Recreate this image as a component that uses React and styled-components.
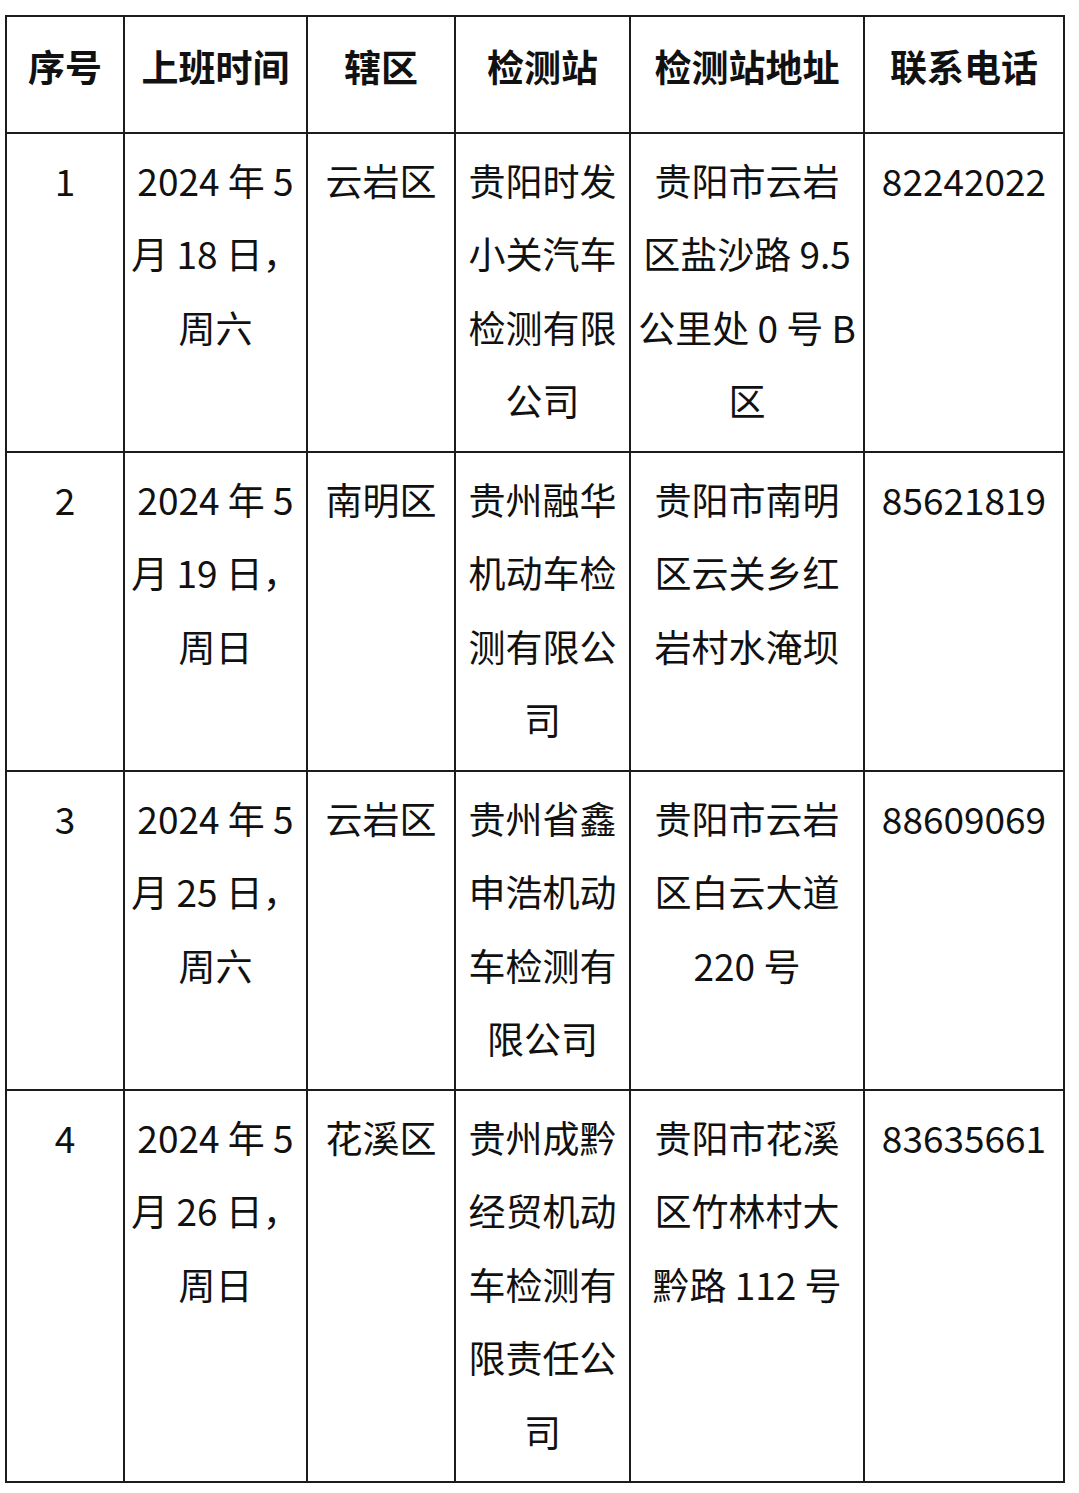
import React from 'react'
import styled, { createGlobalStyle } from 'styled-components'

const GlobalStyle = createGlobalStyle`
  html, body {
    margin: 0;
    padding: 0;
    background: #ffffff;
  }
  body {
    font-family: "Noto Sans CJK SC", "Noto Sans", sans-serif;
    color: #111111;
  }
`;

const Page = styled.div`
  padding: 15px 0 0 5px;
  width: 1079px;
  box-sizing: border-box;
`;

const Table = styled.table`
  border-collapse: collapse;
  table-layout: fixed;
  width: 1058px;
  border: 2px solid #1c1c1c;
`;

const HeadCell = styled.th`
  border: 2px solid #1c1c1c;
  height: 116px;
  box-sizing: border-box;
  padding: 13px 0 28px;
  vertical-align: top;
  text-align: center;
  font-size: 37px;
  font-weight: 700;
  line-height: 73.5px;
  white-space: nowrap;
`;

const Cell = styled.td`
  border: 2px solid #1c1c1c;
  padding: 10px 0 13px;
  vertical-align: top;
  text-align: center;
  font-size: 37px;
  font-weight: 400;
  line-height: 73.5px;
  white-space: nowrap;
`;

const Line = styled.span`
  display: block;
`;

const columns = [
  { title: '序号', width: 118 },
  { title: '上班时间', width: 183 },
  { title: '辖区', width: 148 },
  { title: '检测站', width: 175 },
  { title: '检测站地址', width: 234 },
  { title: '联系电话', width: 200 },
];

const rows = [
  [
    ['1'],
    ['2024 年 5', '月 18 日，', '周六'],
    ['云岩区'],
    ['贵阳时发', '小关汽车', '检测有限', '公司'],
    ['贵阳市云岩', '区盐沙路 9.5', '公里处 0 号 B', '区'],
    ['82242022'],
  ],
  [
    ['2'],
    ['2024 年 5', '月 19 日，', '周日'],
    ['南明区'],
    ['贵州融华', '机动车检', '测有限公', '司'],
    ['贵阳市南明', '区云关乡红', '岩村水淹坝'],
    ['85621819'],
  ],
  [
    ['3'],
    ['2024 年 5', '月 25 日，', '周六'],
    ['云岩区'],
    ['贵州省鑫', '申浩机动', '车检测有', '限公司'],
    ['贵阳市云岩', '区白云大道', '220 号'],
    ['88609069'],
  ],
  [
    ['4'],
    ['2024 年 5', '月 26 日，', '周日'],
    ['花溪区'],
    ['贵州成黔', '经贸机动', '车检测有', '限责任公', '司'],
    ['贵阳市花溪', '区竹林村大', '黔路 112 号'],
    ['83635661'],
  ],
];

function App() {
  return (
    <Page>
      <GlobalStyle />
      <Table>
        <colgroup>
          {columns.map((c) => (
            <col key={c.title} style={{ width: c.width }} />
          ))}
        </colgroup>
        <thead>
          <tr>
            {columns.map((c) => (
              <HeadCell key={c.title}>{c.title}</HeadCell>
            ))}
          </tr>
        </thead>
        <tbody>
          {rows.map((row, i) => (
            <tr key={i}>
              {row.map((lines, j) => (
                <Cell key={j}>
                  {lines.map((text, k) => (
                    <Line key={k}>{text}</Line>
                  ))}
                </Cell>
              ))}
            </tr>
          ))}
        </tbody>
      </Table>
    </Page>
  )
}

export default App
